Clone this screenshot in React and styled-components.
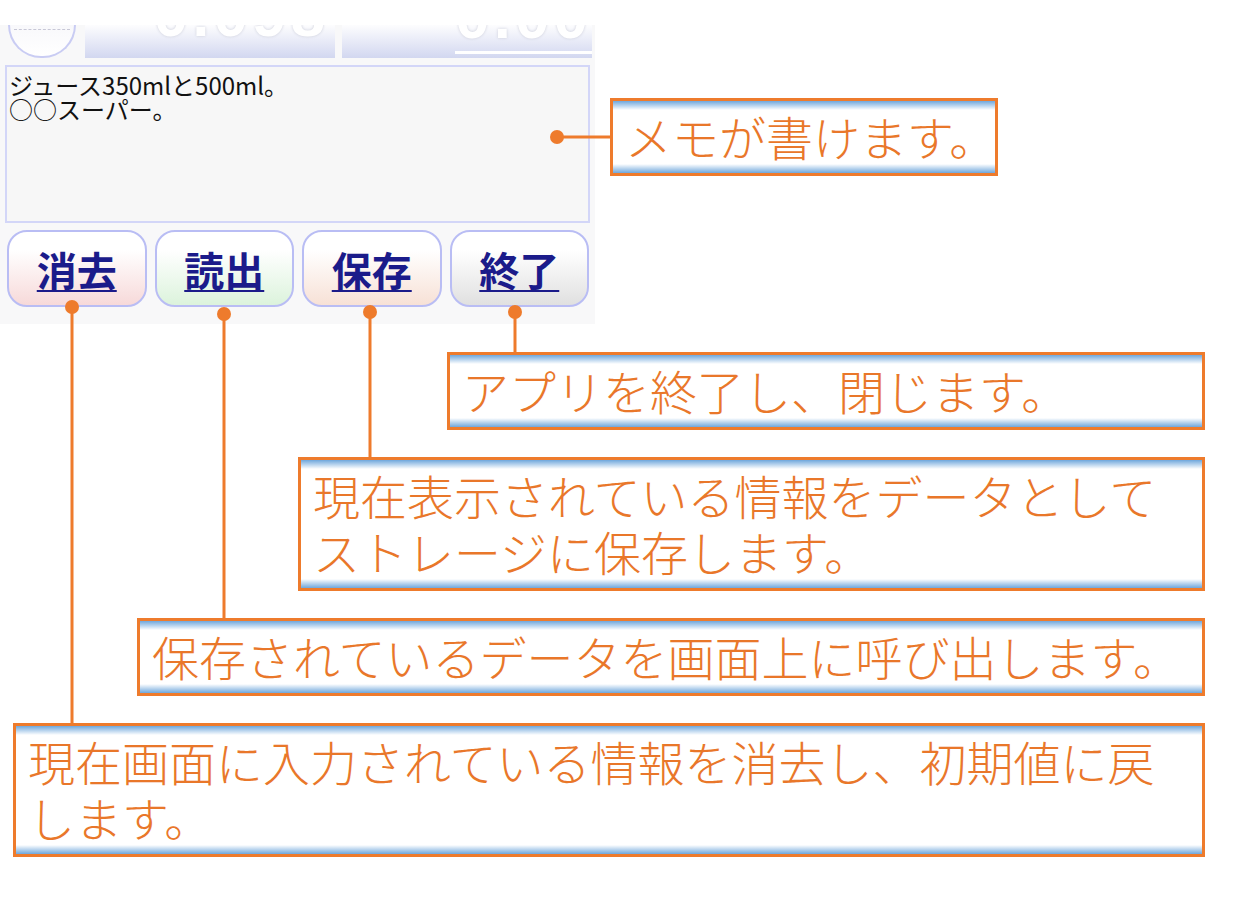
import React from "react"
import styled, { createGlobalStyle } from "styled-components"

const GlobalStyle = createGlobalStyle`
  html, body {
    margin: 0;
    padding: 0;
    background: #ffffff;
  }
  body {
    font-family: "Noto Sans CJK JP", "Noto Sans", sans-serif;
  }
`

const ORANGE = "#ee7b2c"

const Page = styled.div`
  position: relative;
  width: 1249px;
  height: 900px;
  overflow: hidden;
  background: #ffffff;
`

const TopRow = styled.div`
  display: flex;
  align-items: flex-start;
  gap: 15px;
`

const Phone = styled.div`
  width: 595px;
  margin-top: 25px;
  padding-bottom: 17px;
  background: #f8f8f9;
`

const StatusStrip = styled.div`
  display: flex;
  gap: 7px;
  height: 33px;
  padding-left: 8px;
`

const Bowl = styled.div`
  width: 64px;
  height: 31px;
  margin-right: 2px;
  background: linear-gradient(#f8f8fb, #ffffff);
  border: 2px solid #c9ccf3;
  border-top: none;
  border-radius: 0 0 34px 34px;
  position: relative;
  &::before {
    content: "";
    position: absolute;
    left: 4px;
    right: 4px;
    top: 4px;
    border-top: 1px dashed #c7c7d6;
  }
`

const Meter = styled.div`
  width: 250px;
  height: 33px;
  overflow: hidden;
  display: flex;
  flex-direction: column;
  align-items: flex-end;
  justify-content: flex-end;
  background: linear-gradient(#fdfdfe, #d2d7f0);
`

const Digits = styled.span`
  font-family: "Liberation Sans", sans-serif;
  font-weight: bold;
  font-size: 62px;
  line-height: 1;
  color: #ffffff;
  text-shadow: 0 0 3px #c9cbd8;
  letter-spacing: 4px;
  margin-right: ${p => p.$right || 0}px;
  margin-bottom: ${p => (p.$underline ? 4 : 12)}px;
  padding-bottom: ${p => (p.$underline ? 3 : 0)}px;
  border-bottom: ${p => (p.$underline ? "3px solid #ffffff" : "none")};
`

const Memo = styled.div`
  margin: 7px 5px 0 5px;
  height: 148px;
  padding: 6px 4px 0 2px;
  background: #f7f7f7;
  border: 2px solid #d3d6f8;
  font-size: 24px;
  line-height: 24px;
  color: #111111;
`

const ButtonRow = styled.div`
  display: flex;
  gap: 8px;
  margin: 7px 6px 0 7px;
`

const tints = {
  pink: "#f7d9d9",
  green: "#dcf3dc",
  peach: "#f7e1d6",
  gray: "#e0e0e0",
}

const AppButton = styled.div`
  flex: 1;
  height: 73px;
  display: flex;
  align-items: center;
  justify-content: center;
  border: 2px solid #b9bdf4;
  border-radius: 20px;
  background: linear-gradient(#ffffff 25%, ${p => tints[p.$tint]});
  font-size: 40px;
  font-weight: bold;
  color: #1b1b8a;
  text-decoration: underline;
  text-decoration-thickness: 2px;
  text-underline-offset: 4px;
`

const CalloutSide = styled.div`
  margin-top: 98px;
`

const Callouts = styled.div`
  display: flex;
  flex-direction: column;
  gap: 27px;
  margin-top: 28px;
`

const Callout = styled.div`
  box-sizing: border-box;
  width: ${p => (p.$width ? p.$width + "px" : "auto")};
  margin-left: ${p => p.$left || 0}px;
  padding: 7px 10px 9px 12px;
  border: 3px solid ${ORANGE};
  background: linear-gradient(
    #6fa7dc 0px,
    #ffffff 9px,
    #ffffff calc(100% - 9px),
    #6fa7dc 100%
  );
  font-size: 47px;
  font-weight: 300;
  line-height: 56px;
  color: #e9772a;
  white-space: nowrap;
`

const Leaders = styled.svg`
  position: absolute;
  left: 0;
  top: 0;
  pointer-events: none;
`

const lines = [
  { x: 72, y1: 307, y2: 723 },
  { x: 224, y1: 314, y2: 618 },
  { x: 370, y1: 312, y2: 458 },
  { x: 515, y1: 312, y2: 353 },
]

export default function App() {
  return (
    <Page>
      <GlobalStyle />
      <TopRow>
        <Phone>
          <StatusStrip>
            <Bowl />
            <Meter>
              <Digits $right={6}>0.098</Digits>
            </Meter>
            <Meter>
              <Digits $underline>0.00</Digits>
            </Meter>
          </StatusStrip>
          <Memo>
            ジュース350mlと500ml。
            <br />
            ○○スーパー。
          </Memo>
          <ButtonRow>
            <AppButton $tint="pink">消去</AppButton>
            <AppButton $tint="green">読出</AppButton>
            <AppButton $tint="peach">保存</AppButton>
            <AppButton $tint="gray">終了</AppButton>
          </ButtonRow>
        </Phone>
        <CalloutSide>
          <Callout $width={388}>メモが書けます。</Callout>
        </CalloutSide>
      </TopRow>
      <Callouts>
        <Callout $left={447} $width={758}>
          アプリを終了し、閉じます。
        </Callout>
        <Callout $left={298} $width={907}>
          現在表示されている情報をデータとして
          <br />
          ストレージに保存します。
        </Callout>
        <Callout $left={137} $width={1068}>
          保存されているデータを画面上に呼び出します。
        </Callout>
        <Callout $left={13} $width={1192}>
          現在画面に入力されている情報を消去し、初期値に戻
          <br />
          します。
        </Callout>
      </Callouts>
      <Leaders width="1249" height="900">
        <line x1="557" y1="137" x2="610" y2="137" stroke={ORANGE} strokeWidth="3" />
        <circle cx="557" cy="137" r="7" fill={ORANGE} />
        {lines.map(l => (
          <g key={l.x}>
            <line x1={l.x} y1={l.y1} x2={l.x} y2={l.y2} stroke={ORANGE} strokeWidth="3" />
            <circle cx={l.x} cy={l.y1} r="7" fill={ORANGE} />
          </g>
        ))}
      </Leaders>
    </Page>
  )
}
